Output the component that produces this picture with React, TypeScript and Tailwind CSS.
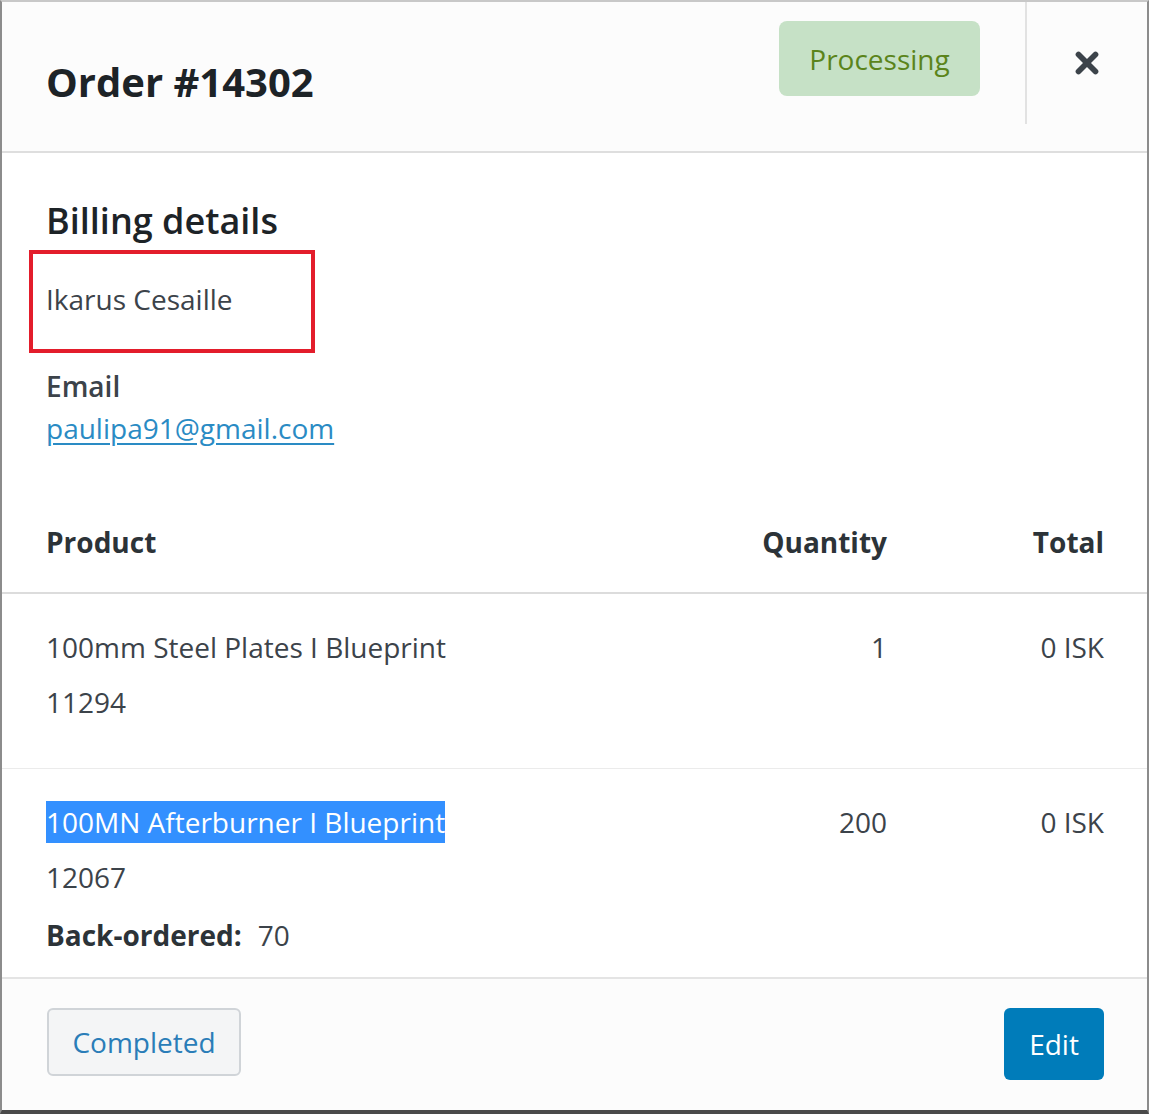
import { X } from 'lucide-react';

const items = [
  { name: '100mm Steel Plates I Blueprint', sku: '11294', qty: '1', total: '0 ISK', selected: false, backordered: null as string | null },
  { name: '100MN Afterburner I Blueprint', sku: '12067', qty: '200', total: '0 ISK', selected: true, backordered: '70' },
];

export default function App() {
  return (
    <div
      className="w-[1149px] h-[1114px] flex flex-col bg-white border-t-2 border-l-2 border-r-2 border-b-4 border-t-[#c8c8c8] border-l-[#8c8c8c] border-r-[#8c8c8c] border-b-[#4a4a4a] overflow-hidden text-[#3c434a]"
      style={{ fontFamily: '"Open Sans", "Noto Sans", sans-serif' }}
    >
      {/* ヘッダー */}
      <header className="h-[151px] shrink-0 flex items-start bg-[#fcfcfc] border-b-2 border-[#dedede]">
        <h1 className="flex-1 pl-[44px] pt-[54px] text-[40px] leading-[52px] font-bold text-[#1d2327]">
          Order #14302
        </h1>
        <div className="mt-[19px] mr-[45px] w-[201px] h-[75px] rounded-[8px] bg-[#c6e1c6] text-[#5b841b] text-[28px] flex items-center justify-center">
          Processing
        </div>
        <button
          type="button"
          className="w-[122px] h-[122px] border-l-2 border-[#e2e2e2] flex items-center justify-center text-[#3c434a]"
        >
          <X size={34} strokeWidth={4} />
        </button>
      </header>

      {/* 本文 */}
      <div className="flex-1 overflow-hidden">
        <div className="px-[44px] pt-[44px]">
          <h2 className="text-[36px] leading-[48px] font-semibold text-[#1d2327]">Billing details</h2>
          <div className="mt-[5px] -ml-[17px] w-[286px] h-[103px] border-4 border-[#e31d2b] pl-[13px] pb-[5px] flex items-center text-[28px]">
            Ikarus Cesaille
          </div>
          <div className="mt-[12px] text-[28px] leading-[42px] font-semibold text-[#3c434a]">Email</div>
          <a href="#" className="block text-[28px] leading-[42px] text-[#2a8bc4] underline underline-offset-4">
            paulipa91@gmail.com
          </a>
        </div>

        <div className="mt-[43px]">
          <div className="h-[102px] flex items-center pl-[44px] pr-[43px] border-b-2 border-[#dcdcdc] text-[28px] font-bold text-[#2c3338]">
            <div className="flex-1">Product</div>
            <div className="w-[200px] text-right">Quantity</div>
            <div className="w-[217px] text-right">Total</div>
          </div>
          {items.map((item, i) => (
            <div
              key={item.sku}
              className={`flex items-start pl-[44px] pr-[43px] pt-[31px] pb-[44px] text-[28px] leading-[44px] ${
                i < items.length - 1 ? 'border-b border-[#ebebeb]' : ''
              }`}
            >
              <div className="flex-1">
                <div>
                  {item.selected ? (
                    <span className="bg-[#3390ff] text-white py-[2px]">{item.name}</span>
                  ) : (
                    item.name
                  )}
                </div>
                <div className="mt-[11px]">{item.sku}</div>
                {item.backordered && (
                  <div className="mt-[14px]">
                    <span className="font-bold text-[#2c3338]">Back-ordered:</span>
                    <span className="ml-[16px]">{item.backordered}</span>
                  </div>
                )}
              </div>
              <div className="w-[200px] text-right">{item.qty}</div>
              <div className="w-[217px] text-right">{item.total}</div>
            </div>
          ))}
        </div>
      </div>

      {/* フッター */}
      <footer className="h-[133px] shrink-0 flex items-start justify-between bg-[#fcfcfc] border-t-2 border-[#e4e4e4] pl-[45px] pr-[43px] pt-[29px]">
        <button
          type="button"
          className="w-[194px] h-[68px] rounded-[6px] border-2 border-[#d0d4d8] bg-[#f4f5f6] text-[#2a7db8] text-[28px]"
        >
          Completed
        </button>
        <button
          type="button"
          className="w-[100px] h-[72px] rounded-[6px] bg-[#007cba] text-white text-[28px]"
        >
          Edit
        </button>
      </footer>
    </div>
  );
}
